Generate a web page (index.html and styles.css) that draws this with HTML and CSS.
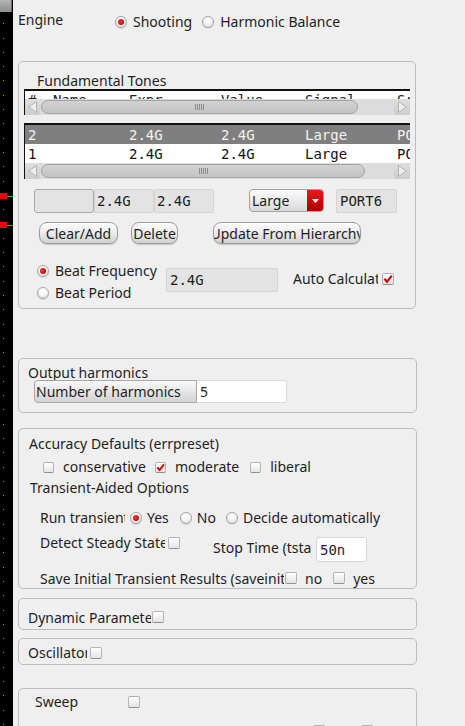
FILE: index.html
```html
<!DOCTYPE html>
<html>
<head>
<meta charset="utf-8">
<link rel="stylesheet" href="styles.css">
</head>
<body>
<div class="page">
  <div class="strip">
    <div class="strip-top"></div>
    <div class="dots"></div>
    <div class="marker m1"></div>
    <div class="marker m2"></div>
  </div>
  <div class="main">
    <div class="engine-row">
      <span class="engine-lbl">Engine</span>
      <span class="radio on"></span><span class="opt">Shooting</span>
      <span class="radio"></span><span class="opt">Harmonic Balance</span>
    </div>

    <div class="group g-tones">
      <div class="g-title">Fundamental Tones</div>
      <div class="tbl t1">
        <div class="thead-clip">
          <div class="trow head"><span>#</span><span>Name</span><span>Expr</span><span>Value</span><span>Signal</span><span>Src</span></div>
        </div>
        <div class="hscroll">
          <div class="sb-btn"><svg width="9" height="12" viewBox="0 0 9 12"><path d="M8.5 0.5 L0.8 6 L8.5 11.5 Z" fill="#efefef" stroke="#b2b2b2"/></svg></div>
          <div class="sb-track"><div class="sb-thumb"><span class="grip"></span></div></div>
          <div class="sb-btn right"><svg width="9" height="12" viewBox="0 0 9 12"><path d="M0.5 0.5 L8.2 6 L0.5 11.5 Z" fill="#efefef" stroke="#b2b2b2"/></svg></div>
        </div>
      </div>
      <div class="tbl t2">
        <div class="trow r sel"><span>2</span><span></span><span>2.4G</span><span>2.4G</span><span>Large</span><span>PORT6</span></div>
        <div class="trow r"><span>1</span><span></span><span>2.4G</span><span>2.4G</span><span>Large</span><span>PORT5</span></div>
        <div class="hscroll">
          <div class="sb-btn"><svg width="9" height="12" viewBox="0 0 9 12"><path d="M8.5 0.5 L0.8 6 L8.5 11.5 Z" fill="#efefef" stroke="#b2b2b2"/></svg></div>
          <div class="sb-track"><div class="sb-thumb"><span class="grip"></span></div></div>
          <div class="sb-btn right"><svg width="9" height="12" viewBox="0 0 9 12"><path d="M0.5 0.5 L8.2 6 L0.5 11.5 Z" fill="#efefef" stroke="#b2b2b2"/></svg></div>
        </div>
      </div>

      <div class="tone-inputs">
        <div class="fld mono dark"></div>
        <div class="fld mono">2.4G</div>
        <div class="fld mono">2.4G</div>
        <div class="select">
          <span class="val">Large</span>
          <span class="arrow"><svg width="7" height="4" viewBox="0 0 7 4"><path d="M0 0H7L3.5 4Z" fill="#fff"/></svg></span>
        </div>
        <div class="fld mono port">PORT6</div>
      </div>

      <div class="btn-row">
        <div class="btn b-clear">Clear/Add</div>
        <div class="btn b-del">Delete</div>
        <div class="btn b-upd">Update From Hierarchy</div>
      </div>

      <div class="beat">
        <div class="beat-opts">
          <div class="beat-opt"><span class="radio on"></span><span>Beat Frequency</span></div>
          <div class="beat-opt"><span class="radio"></span><span>Beat Period</span></div>
        </div>
        <div class="fld mono beat-val">2.4G</div>
        <div class="auto">
          <span class="clip w-auto">Auto Calculate</span>
          <span class="cb on"><svg width="10" height="10" viewBox="0 0 10 10"><path d="M1.5 4.8 L4 7.8 L8.8 1.6" fill="none" stroke="#d40000" stroke-width="2.2"/></svg></span>
        </div>
      </div>
    </div>

    <div class="group g-harm">
      <div class="g-title">Output harmonics</div>
      <div class="harm-row">
        <div class="harm-btn">Number of harmonics</div>
        <div class="harm-in">5</div>
      </div>
    </div>

    <div class="group g-acc">
      <div class="acc-title">Accuracy Defaults (errpreset)</div>
      <div class="acc-row">
        <span class="cb small"></span><span class="cb-lbl">conservative</span>
        <span class="cb small on sp"><svg width="9" height="9" viewBox="0 0 9 9"><path d="M1.3 4.3 L3.6 7 L8 1.4" fill="none" stroke="#d40000" stroke-width="2"/></svg></span><span class="cb-lbl">moderate</span>
        <span class="cb small sp2"></span><span class="cb-lbl">liberal</span>
      </div>
      <div class="ta-title">Transient-Aided Options</div>
      <div class="run-row">
        <span class="clip w-run">Run transient</span>
        <span class="radio on r-yes"></span><span class="ropt">Yes</span>
        <span class="radio r-gap"></span><span class="ropt">No</span>
        <span class="radio r-gap2"></span><span class="ropt">Decide automatically</span>
      </div>
      <div class="detect-row">
        <span class="clip w-detect">Detect Steady State</span>
        <span class="cb d-cb"></span>
        <div class="stop">
          <span class="clip w-stop">Stop Time (tstab)</span>
          <div class="stop-in mono">50n</div>
        </div>
      </div>
      <div class="save-row">
        <span class="clip w-save">Save Initial Transient Results (saveinit)</span>
        <span class="cb s-cb1"></span><span class="s-lbl">no</span>
        <span class="cb s-cb2"></span><span class="s-lbl">yes</span>
      </div>
    </div>

    <div class="group g-line g-dyn">
      <span class="clip w-dyn">Dynamic Parameters</span>
      <span class="cb l-cb"></span>
    </div>

    <div class="group g-line g-osc">
      <span class="clip w-osc">Oscillator</span>
      <span class="cb l-cb o-cb"></span>
    </div>

    <div class="group g-sweep">
      <div class="sweep-row">
        <span class="sweep-lbl">Sweep</span>
        <span class="cb l-cb"></span>
      </div>
      <div class="sweep-sub">
        <span class="cb sw1"></span>
        <span class="cb sw2"></span>
      </div>
    </div>
  </div>
</div>
</body>
</html>
```

FILE: styles.css
```css
* { box-sizing: border-box; }
html, body { margin: 0; padding: 0; }
body {
  background: #efefef;
  font-family: "Noto Sans", sans-serif;
  font-size: 14px;
  color: #1e1e1e;
  width: 465px;
  height: 726px;
  overflow: hidden;
}
.page { display: flex; height: 726px; }

/* left canvas strip */
.strip { width: 13px; flex: none; background: #000; position: relative; }
.strip-top { width: 12px; height: 12px; background: linear-gradient(#b4b4b4, #8c8c8c); border-right: 1px solid #6a6a6a; }
.dots {
  position: absolute; left: 3px; top: 9px; bottom: 0; width: 1px;
  background: repeating-linear-gradient(to bottom, #35d035 0 1px, transparent 1px 14.3px);
}
.marker { position: absolute; left: 0; width: 7px; height: 6px; background: #ee0000; }
.marker::after { content: ""; position: absolute; left: 7px; top: 3px; width: 6px; height: 1px; background: #22bb33; }
.m1 { top: 193px; }
.m2 { top: 222px; }

.main { flex: 1; padding-left: 5px; }

/* common controls */
.radio {
  width: 12px; height: 12px; flex: none; position: relative;
  border-radius: 50%;
  border: 1px solid #a6a6a6;
  background: radial-gradient(circle at 50% 35%, #ffffff 0, #f6f6f6 45%, #d2d2d2 100%);
  box-shadow: 0 1px 1px rgba(0,0,0,0.12);
}
.radio.on::after {
  content: ""; position: absolute; left: 2px; top: 2px; width: 6px; height: 6px;
  border-radius: 50%;
  background: radial-gradient(circle at 40% 40%, #ff3a3a, #c20000 75%);
}
.cb {
  width: 12px; height: 12px; flex: none;
  border: 1px solid #b4b4b4; border-bottom-color: #8e8e8e;
  border-radius: 2px;
  background: linear-gradient(#ffffff, #e4e4e4);
  display: flex; align-items: center; justify-content: center;
}
.cb.small { width: 11px; height: 11px; }
.clip { overflow: hidden; white-space: nowrap; flex: none; line-height: 20px; }
.mono { font-family: "DejaVu Sans Mono", monospace; font-size: 14px; }

/* engine */
.engine-row { display: flex; align-items: flex-start; margin-top: 10px; height: 22px; }
.engine-lbl { width: 97px; line-height: 20px; flex: none; }
.engine-row .radio { margin-top: 6px; }
.engine-row .opt { line-height: 20px; margin-top: 2px; margin-left: 6px; margin-right: 10px; }

/* groups */
.group { border: 1px solid #bcbcbc; border-radius: 5px; width: 399px; }
.g-tones { margin-top: 29px; width: 398px; padding: 11px 0 4px 5px; }
.g-title { line-height: 16px; margin-left: 13px; }

/* tables */
.tbl { width: 386px; border-top: 2px solid #111; border-left: 1px solid #111; background: #fff; overflow: hidden; }
.t2 { margin-top: 8px; }
.thead-clip { height: 8px; overflow: hidden; }
.trow {
  display: grid;
  grid-template-columns: 25px 76px 92px 84px 92px 40px;
  padding-left: 3px;
  font-family: "DejaVu Sans Mono", monospace; font-size: 14px;
  white-space: nowrap; overflow: hidden;
}
.trow.head { line-height: 14px; margin-top: 2px; color: #222; }
.trow.r { height: 19px; line-height: 21px; color: #111; }
.trow.sel { background: #7f7f7f; color: #f2f2f2; }

.hscroll { display: flex; height: 16px; background: #d9d9d9; }
.sb-btn {
  width: 15px; flex: none;
  background: linear-gradient(#dedede, #cdcdcd);
  display: flex; align-items: center; justify-content: center;
}
.sb-btn.right { width: 16px; }
.sb-track { flex: 1; padding: 1px 0 1px 1px; background: #dcdcdc; }
.sb-thumb {
  height: 14px; border-radius: 7px;
  border: 1px solid #a3a3a3;
  background: linear-gradient(#d2d2d2, #c3c3c3);
  display: flex; align-items: center; justify-content: center;
}
.t1 .sb-thumb { width: 317px; }
.t2 .sb-thumb { width: 324px; }
.grip { width: 9px; height: 6px; background: repeating-linear-gradient(to right, #8c8c8c 0 1px, transparent 1px 2px); }

/* tone inputs */
.tone-inputs { display: flex; align-items: flex-start; margin: 10px 0 0 10px; }
.fld {
  width: 60px; height: 24px; flex: none;
  background: #e3e3e3; border: 1px solid #d4d4d4; border-radius: 2px;
  line-height: 23px; padding-left: 2px; white-space: nowrap; overflow: hidden;
}
.fld.dark { border-color: #a9a9a9; border-radius: 3px; }
.fld.port { width: 61px; margin-left: 12px; padding-left: 3px; }
.select {
  display: flex; width: 75px; height: 23px; margin-left: 35px; flex: none;
  border: 1px solid #a3a3a3; border-radius: 4px;
  background: linear-gradient(#fbfbfb, #dadada);
  overflow: hidden;
}
.select .val { flex: 1; padding-left: 2px; line-height: 21px; }
.select .arrow {
  width: 16px; flex: none;
  background: linear-gradient(#e51b1b, #a80000);
  display: flex; align-items: center; justify-content: center;
}

/* buttons */
.btn-row { display: flex; margin: 9px 0 0 15px; }
.btn {
  height: 22px; flex: none;
  border: 1px solid #9d9d9d; border-radius: 8px;
  background: linear-gradient(#fdfdfd, #ececec 50%, #d0d0d0);
  box-shadow: 0 1px 1px rgba(0,0,0,0.18);
  display: flex; justify-content: center;
  line-height: 21px; white-space: nowrap; overflow: hidden;
}
.b-clear { width: 79px; }
.b-del { width: 47px; margin-left: 13px; }
.b-upd { width: 148px; margin-left: 35px; }

/* beat */
.beat { display: flex; align-items: flex-start; margin: 16px 0 0 13px; }
.beat-opts { width: 129px; flex: none; }
.beat-opt { display: flex; align-items: center; height: 22px; line-height: 22px; }
.beat-opt .radio { margin-right: 6px; }
.fld.beat-val { width: 112px; margin-top: 8px; padding-left: 3px; }
.auto { display: flex; align-items: flex-start; margin: 9px 0 0 15px; }
.w-auto { width: 85px; }
.auto .cb { margin-top: 4px; margin-left: 4px; }

/* output harmonics */
.g-harm { margin-top: 49px; padding: 6px 0 9px 0; }
.g-harm .g-title { margin-left: 9px; }
.harm-row { display: flex; margin: -1px 0 0 15px; }
.harm-btn {
  width: 163px; height: 23px;
  border: 1px solid #a8a8a8; border-radius: 4px 0 0 4px;
  background: linear-gradient(#fafafa, #e6e6e6 50%, #d2d2d2);
  padding-left: 1px; line-height: 21px; white-space: nowrap;
}
.harm-in {
  width: 90px; height: 23px; background: #fff;
  border: 1px solid #dadada; border-left: none; border-radius: 0 3px 3px 0;
  padding-left: 3px; line-height: 21px;
}

/* accuracy */
.g-acc { margin-top: 15px; padding: 5px 0 0 0; }
.acc-title { line-height: 20px; margin-left: 10px; }
.acc-row { display: flex; align-items: flex-start; height: 20px; margin: 3px 0 0 24px; line-height: 20px; }
.acc-row .cb { margin-top: 5px; }
.cb-lbl { margin-left: 9px; }
.acc-row .sp { margin-left: 9px; }
.acc-row .sp2 { margin-left: 11px; }
.ta-title { line-height: 20px; margin: 1px 0 0 11px; }
.run-row { display: flex; align-items: center; height: 20px; margin: 10px 0 0 21px; line-height: 20px; }
.w-run { width: 85px; }
.r-yes { margin-left: 5px; }
.r-gap { margin-left: 11px; }
.r-gap2 { margin-left: 10px; }
.ropt { margin-left: 5px; }
.detect-row { display: flex; align-items: flex-start; margin: 5px 0 0 21px; }
.w-detect { width: 125px; }
.d-cb { margin: 4px 0 0 3px; }
.stop { display: flex; align-items: flex-start; margin: 4px 0 0 33px; }
.w-stop { width: 98px; margin: 1px 5px 0 0; }
.stop-in {
  width: 51px; height: 25px; background: #fff;
  border: 1px solid #d6d6d6; border-radius: 3px;
  padding-left: 3px; line-height: 24px;
}
.save-row { display: flex; align-items: flex-start; margin: 8px 0 0 21px; line-height: 18px; height: 18px; }
.w-save { width: 244px; line-height: 18px; }
.s-cb1 { margin: 2px 0 0 1px; }
.s-cb2 { margin: 2px 0 0 11px; }
.s-lbl { margin-left: 8px; }

/* single-line groups */
.g-line { display: flex; align-items: flex-start; padding: 0 0 1px 9px; }
.g-dyn { margin-top: 9px; padding-top: 9px; }
.w-dyn { width: 123px; }
.l-cb { margin: 3px 0 0 1px; }
.g-osc { margin-top: 8px; padding-top: 4px; }
.w-osc { width: 59px; }
.o-cb { margin: 4px 0 0 3px; }

.g-sweep { margin-top: 23px; height: 70px; padding: 3px 0 0 16px; }
.sweep-row { display: flex; align-items: flex-start; }
.sweep-lbl { width: 93px; line-height: 20px; }
.sweep-row .l-cb { margin: 4px 0 0 0; }
.sweep-sub { display: flex; margin-top: 13px; }
.sw1 { margin-left: 278px; }
.sw2 { margin-left: 36px; }
```
